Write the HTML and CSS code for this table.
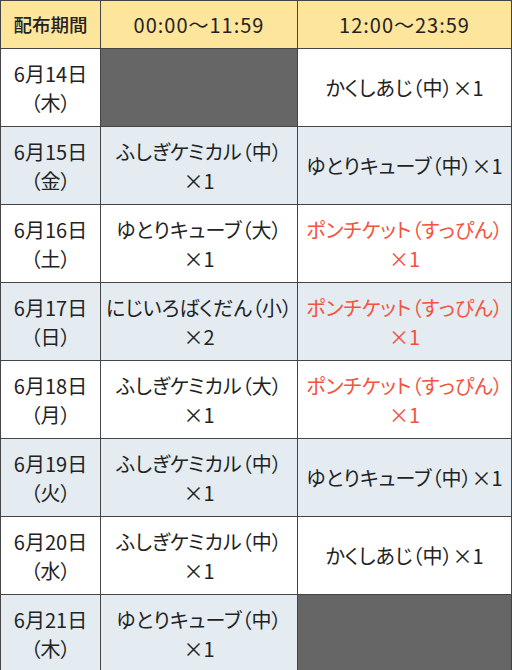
FILE: index.html
```html
<!DOCTYPE html>
<html lang="ja">
<head>
<meta charset="utf-8">
<link rel="stylesheet" href="styles.css">
</head>
<body>
<table class="schedule">
  <colgroup>
    <col class="c-date">
    <col class="c-am">
    <col class="c-pm">
  </colgroup>
  <thead>
    <tr>
      <th class="h-period">配布期間</th>
      <th class="h-time">00:00～11:59</th>
      <th class="h-time">12:00～23:59</th>
    </tr>
  </thead>
  <tbody>
    <tr class="odd">
      <td>6月14日<br>（木）</td>
      <td class="none"></td>
      <td>かくしあじ（中）×1</td>
    </tr>
    <tr class="even">
      <td>6月15日<br>（金）</td>
      <td>ふしぎケミカル（中）<br>×1</td>
      <td>ゆとりキューブ（中）×1</td>
    </tr>
    <tr class="odd">
      <td>6月16日<br>（土）</td>
      <td>ゆとりキューブ（大）<br>×1</td>
      <td class="red">ポンチケット（すっぴん）<br>×1</td>
    </tr>
    <tr class="even">
      <td>6月17日<br>（日）</td>
      <td>にじいろばくだん（小）<br>×2</td>
      <td class="red">ポンチケット（すっぴん）<br>×1</td>
    </tr>
    <tr class="odd">
      <td>6月18日<br>（月）</td>
      <td>ふしぎケミカル（大）<br>×1</td>
      <td class="red">ポンチケット（すっぴん）<br>×1</td>
    </tr>
    <tr class="even">
      <td>6月19日<br>（火）</td>
      <td>ふしぎケミカル（中）<br>×1</td>
      <td>ゆとりキューブ（中）×1</td>
    </tr>
    <tr class="odd">
      <td>6月20日<br>（水）</td>
      <td>ふしぎケミカル（中）<br>×1</td>
      <td>かくしあじ（中）×1</td>
    </tr>
    <tr class="even">
      <td>6月21日<br>（木）</td>
      <td>ゆとりキューブ（中）<br>×1</td>
      <td class="none"></td>
    </tr>
  </tbody>
</table>
</body>
</html>
```
FILE: styles.css
```css
html, body {
  margin: 0;
  padding: 0;
  background: #ffffff;
}

.schedule {
  width: 511px;
  border-collapse: collapse;
  table-layout: fixed;
  font-family: "Noto Sans CJK JP", "Noto Sans", sans-serif;
  font-size: 20px;
  line-height: 29px;
  color: #222222;
  font-feature-settings: "palt";
}

.c-date { width: 100px; }
.c-am { width: 197px; }
.c-pm { width: 214px; }

.schedule th,
.schedule td {
  border: 1px solid #444444;
  text-align: center;
  vertical-align: middle;
  padding: 0;
}

.schedule th {
  background: #fde59b;
  height: 47px;
  font-weight: 400;
}

.schedule th.h-period {
  font-weight: 500;
  font-size: 18.5px;
}

.schedule th.h-time {
  font-feature-settings: normal;
  letter-spacing: 1px;
}

.schedule td {
  height: 77px;
}

.odd td { background: #ffffff; }
.even td { background: #e4ecf1; }

.schedule td.none { background: #666666; }

.schedule td.red { color: #f3533f; }
```
